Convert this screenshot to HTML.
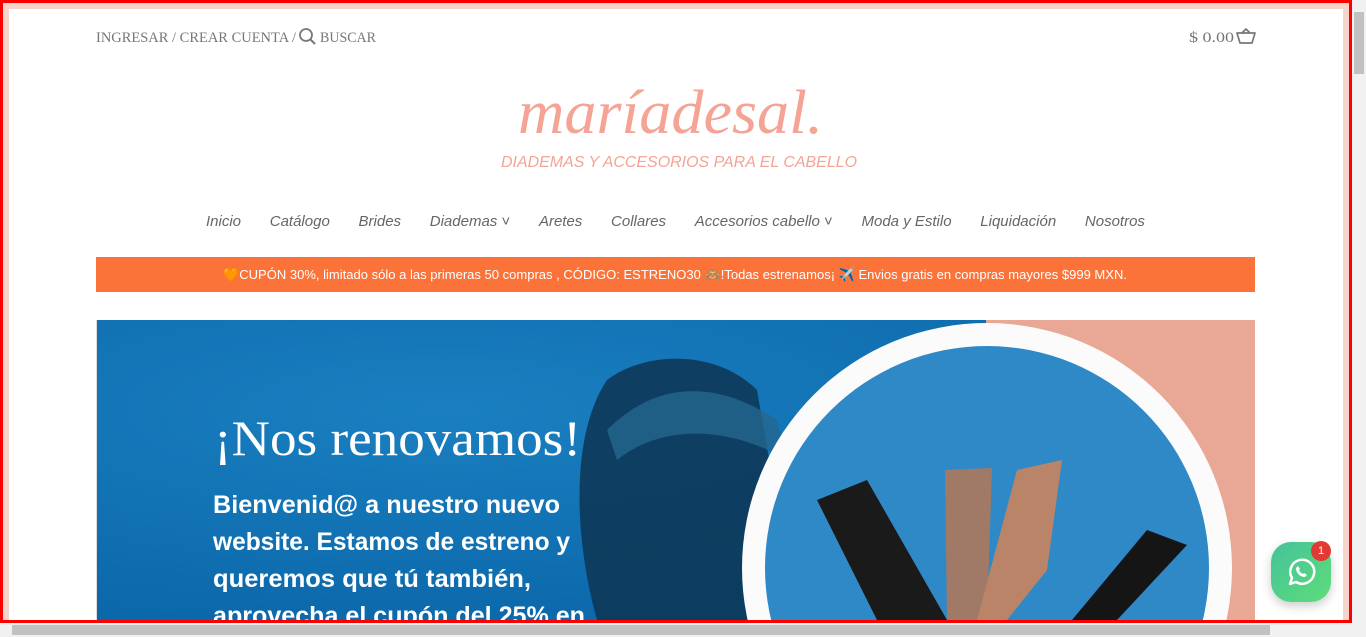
<!DOCTYPE html>
<html><head><meta charset="utf-8">
<style>
*{margin:0;padding:0;box-sizing:border-box}
html,body{width:1366px;height:637px;overflow:hidden;background:#fff;font-family:"Liberation Sans",sans-serif}
.frame{position:absolute;left:0;top:0;width:1352px;height:623px;border:3px solid #f00;}
.pink{position:absolute;left:3px;top:3px;width:1346px;height:617px;border:6px solid #f6d5cd;border-bottom:none}
.vs{position:absolute;left:1352px;top:0;width:14px;height:637px;background:#f1f1f1}
.vs .th{position:absolute;left:2px;top:12px;width:10px;height:62px;background:#c1c1c1}
.hs{position:absolute;left:0;top:623px;width:1352px;height:14px;background:#f1f1f1}
.hs .th{position:absolute;left:12px;top:2px;width:1258px;height:10px;background:#c1c1c1}
.nav{position:absolute;left:206px;width:939px;top:213px;display:flex;justify-content:space-between;font-style:italic;font-size:15px;color:#666}
.bar{position:absolute;left:96px;top:257px;width:1159px;height:35px;background:#fb7338}
.hero{position:absolute;left:96px;top:320px;width:1159px;height:300px;background:#0f73b4;overflow:hidden;border-left:1px solid #ddd}
</style></head><body>
<svg style="position:absolute;left:90px;top:24px" width="300" height="26">
<text x="6" y="18" textLength="200" lengthAdjust="spacingAndGlyphs" font-family="Liberation Serif" font-size="15" fill="#777">INGRESAR / CREAR CUENTA /</text>
<circle cx="216" cy="11" r="6" fill="none" stroke="#777" stroke-width="1.8"/><line x1="220.5" y1="15.5" x2="225" y2="20" stroke="#777" stroke-width="2"/>
<text x="230" y="18" textLength="56" lengthAdjust="spacingAndGlyphs" font-family="Liberation Serif" font-size="15" fill="#777">BUSCAR</text>
</svg>
<svg style="position:absolute;left:1185px;top:24px" width="75" height="26">
<text x="4" y="18" textLength="45" lengthAdjust="spacingAndGlyphs" font-family="Liberation Serif" font-size="15" fill="#777">$ 0.00</text>
<path d="M52 9h18l-3 10H55z M57 9l4-4 4 4" fill="none" stroke="#777" stroke-width="1.7" stroke-linejoin="round"/>
</svg>
<svg style="position:absolute;left:480px;top:80px" width="400" height="100">
<text x="38" y="53" textLength="305" lengthAdjust="spacingAndGlyphs" font-family="Liberation Serif" font-style="italic" font-size="62" fill="#f5a394">maríadesal.</text>
<text x="21" y="87" textLength="356" lengthAdjust="spacingAndGlyphs" font-family="Liberation Sans" font-style="italic" font-size="16" fill="#f5a394">DIADEMAS Y ACCESORIOS PARA EL CABELLO</text>
</svg>
<div class="nav"><span>Inicio</span><span>Catálogo</span><span>Brides</span><span>Diademas ˅</span><span>Aretes</span><span>Collares</span><span>Accesorios cabello ˅</span><span>Moda y Estilo</span><span>Liquidación</span><span>Nosotros</span></div>
<div class="bar"><svg width="1159" height="35"><text x="127" y="22" textLength="904" lengthAdjust="spacingAndGlyphs" font-family="Liberation Sans" font-size="13" fill="#fff">🧡CUPÓN 30%, limitado sólo a las primeras 50 compras , CÓDIGO: ESTRENO30 🙈!Todas estrenamos¡ ✈️ Envios gratis en compras mayores $999 MXN.</text></svg></div>
<div class="hero">
<svg width="1159" height="300">
<defs><radialGradient id="g" cx=".3" cy=".3" r=".8"><stop offset="0" stop-color="#1a7fc0"/><stop offset="1" stop-color="#0a66a8"/></radialGradient></defs>
<rect width="1159" height="300" fill="url(#g)"/>
<rect x="889" width="270" height="300" fill="#e9a896"/>
<path d="M500 300 C480 230 470 120 510 60 C550 30 620 30 660 70 L700 300Z" fill="#0d3552" opacity=".85"/>
<path d="M510 110 C560 60 620 60 680 100 L690 140 C640 110 570 100 520 140Z" fill="#24678f" opacity=".8"/>
<circle cx="890" cy="248" r="245" fill="#fbfbfb"/>
<circle cx="890" cy="248" r="222" fill="#2e89c6"/>
<path d="M720 180 L770 160 L850 300 L780 300Z" fill="#1a1a1a"/>
<path d="M848 150 L895 148 L890 300 L850 300Z" fill="#a07a66"/>
<path d="M920 150 L965 140 L950 250 L910 300 L880 300Z" fill="#b98468"/>
<path d="M1050 210 L1090 225 L1020 300 L975 300Z" fill="#151515"/>
<text x="117" y="135" textLength="367" lengthAdjust="spacingAndGlyphs" font-family="Liberation Serif" font-size="50" fill="#fff">¡Nos renovamos!</text>
<g font-family="Liberation Sans" font-weight="bold" font-size="25" fill="#fff">
<text x="116" y="193" textLength="347" lengthAdjust="spacingAndGlyphs">Bienvenid@ a nuestro nuevo</text>
<text x="116" y="230" textLength="357" lengthAdjust="spacingAndGlyphs">website. Estamos de estreno y</text>
<text x="116" y="267" textLength="318" lengthAdjust="spacingAndGlyphs">queremos que tú también,</text>
<text x="116" y="304" textLength="372" lengthAdjust="spacingAndGlyphs">aprovecha el cupón del 25% en</text>
</g>
</svg>
</div>
<div style="position:absolute;left:1271px;top:542px;width:60px;height:60px;border-radius:20px;background:linear-gradient(135deg,#45c39a,#5ddc7a);box-shadow:0 4px 10px rgba(0,0,0,.2)">
<svg width="60" height="60" viewBox="0 0 60 60"><path d="M19 42 L21 36 A12 12 0 1 1 25 40 Z" fill="none" stroke="#fff" stroke-width="2.5" stroke-linejoin="round"/><path d="M25 26 c0 5 4 9 9 9 l2-2 -3-2 -1 1 c-2-1-3-2-4-4 l1-1 -2-3z" fill="#fff"/></svg>
<div style="position:absolute;left:40px;top:-1px;width:20px;height:20px;border-radius:50%;background:#e03a32;color:#fff;font-size:11px;text-align:center;line-height:20px">1</div>
</div>
<div class="frame"></div><div class="pink"></div>
<div class="vs"><div class="th"></div></div><div class="hs"><div class="th"></div></div>
</body></html>
